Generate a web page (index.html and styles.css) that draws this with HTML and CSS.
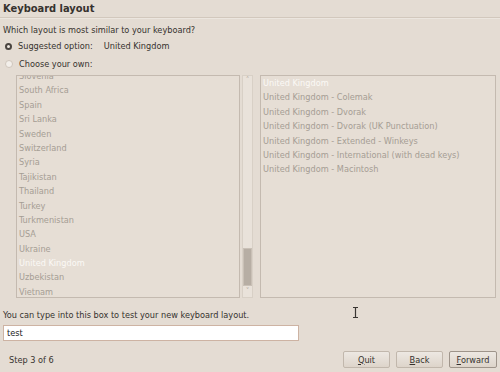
FILE: index.html
```html
<!DOCTYPE html>
<html lang="en">
<head>
    <meta charset="UTF-8">
    <title>Keyboard layout</title>
    <link rel="stylesheet" href="styles.css">
</head>
<body>
    <div class="window">
        <h1 class="title">Keyboard layout</h1>

        <div class="body">
            <p class="question">Which layout is most similar to your keyboard?</p>

            <label class="radio-row">
                <span class="radio checked"></span>
                <span>Suggested option:</span>
                <span class="suggested">United Kingdom</span>
            </label>
            <label class="radio-row">
                <span class="radio"></span>
                <span>Choose your own:</span>
            </label>

            <div class="lists">
                <div class="list countries">
                    <div class="rows shifted">
                        <div class="row">Slovenia</div>
                        <div class="row">South Africa</div>
                        <div class="row">Spain</div>
                        <div class="row">Sri Lanka</div>
                        <div class="row">Sweden</div>
                        <div class="row">Switzerland</div>
                        <div class="row">Syria</div>
                        <div class="row">Tajikistan</div>
                        <div class="row">Thailand</div>
                        <div class="row">Turkey</div>
                        <div class="row">Turkmenistan</div>
                        <div class="row">USA</div>
                        <div class="row">Ukraine</div>
                        <div class="row selected">United Kingdom</div>
                        <div class="row">Uzbekistan</div>
                        <div class="row">Vietnam</div>
                    </div>
                </div>
                <div class="scrollbar">
                    <span class="arrow">&#708;</span>
                    <span class="trough"><span class="thumb"></span></span>
                    <span class="arrow">&#709;</span>
                </div>
                <div class="list variants">
                    <div class="rows">
                        <div class="row selected">United Kingdom</div>
                        <div class="row">United Kingdom - Colemak</div>
                        <div class="row">United Kingdom - Dvorak</div>
                        <div class="row">United Kingdom - Dvorak (UK Punctuation)</div>
                        <div class="row">United Kingdom - Extended - Winkeys</div>
                        <div class="row">United Kingdom - International (with dead keys)</div>
                        <div class="row">United Kingdom - Macintosh</div>
                    </div>
                </div>
            </div>

            <p class="hint">You can type into this box to test your new keyboard layout.</p>
            <div class="test-box">test</div>

            <!-- mouse pointer from the screenshot -->
            <svg class="pointer" width="7" height="11" viewBox="0 0 7 11">
                <path d="M1 0.5h5M1 10.5h5M3.5 0.5v10" stroke="#3a3632" stroke-width="1.2" fill="none"/>
            </svg>
        </div>

        <div class="footer">
            <span class="step">Step 3 of 6</span>
            <div class="buttons">
                <button><u>Q</u>uit</button>
                <button><u>B</u>ack</button>
                <button class="default"><u>F</u>orward</button>
            </div>
        </div>
    </div>
</body>
</html>
```

FILE: styles.css
```css
body {
    margin: 0;
    background: #e4dcd3;
    font-family: 'DejaVu Sans Condensed', 'DejaVu Sans', sans-serif;
    font-size: 9.1px;
    color: #36322e;
}
.window {
    width: 500px;
    height: 372px;
    position: relative;
    overflow: hidden;
}
.title {
    margin: 0;
    padding: 1px 3px 0;
    height: 16px;
    font-size: 11px;
    font-weight: bold;
    line-height: 16px;
    border-bottom: 1px solid #d2c8bd;
    box-shadow: 0 1px 0 #ece6df;
}
.body {
    padding: 6px 3px 0;
}
.question {
    margin: 0;
    line-height: 13px;
}
.radio-row {
    display: flex;
    align-items: center;
    height: 18px;
}
.radio-row span:nth-child(2) {
    margin-left: 6px;
}
.radio {
    width: 6px;
    height: 6px;
    margin-left: 2px;
    border-radius: 50%;
    border: 1px solid #cfc6bc;
    background: #f3efea;
}
.radio.checked {
    border: 2px solid #4a4540;
    width: 3px;
    height: 3px;
    background: #efe9e2;
}
.suggested {
    margin-left: 11px;
}
.lists {
    display: flex;
    margin: 2px 0 0 13px;
    height: 223px;
}
.list {
    border: 1px solid #c4bab0;
    overflow: hidden;
    color: #a59d94;
    background: #e6ded5;
}
.countries {
    width: 222px;
}
.variants {
    width: 234px;
    margin-left: 7px;
}
.rows {
    padding: 0 2px;
}
.shifted {
    margin-top: -7px;
}
.row {
    height: 14.4px;
    line-height: 14.4px;
    white-space: nowrap;
}
.row.selected {
    color: #fbf9f6;
}
.scrollbar {
    width: 11px;
    margin-left: 2px;
    display: flex;
    flex-direction: column;
    border: 1px solid #d8d0c6;
    background: #e9e2da;
    box-sizing: border-box;
}
.arrow {
    height: 10px;
    font-size: 8px;
    line-height: 10px;
    text-align: center;
    color: #b8b0a6;
}
.trough {
    flex: 1;
    display: flex;
    flex-direction: column;
    justify-content: flex-end;
}
.thumb {
    height: 36px;
    margin: 0 0 1px;
    background: #b7aea4;
    border: 1px solid #c9c0b6;
}
.hint {
    margin: 10px 0 0;
    line-height: 14px;
}
.test-box {
    margin-top: 3px;
    width: 288px;
    height: 14px;
    padding: 0 3px 0 3px;
    line-height: 14px;
    background: #ffffff;
    border: 1px solid #cdb3a3;
    color: #222;
}
.pointer {
    position: absolute;
    left: 352px;
    top: 307px;
}
.footer {
    display: flex;
    align-items: center;
    justify-content: space-between;
    padding: 10px 3px 0 9px;
}
.buttons {
    display: flex;
    gap: 6px;
}
button {
    font-family: 'DejaVu Sans Condensed', 'DejaVu Sans', sans-serif;
    font-size: 9.1px;
    height: 17px;
    width: 47px;
    padding: 0;
    color: #36322e;
    background: linear-gradient(#ede8e2, #ddd4ca);
    border: 1px solid #c1b7ac;
    border-radius: 2px;
}
button.default {
    width: 48px;
    border-color: #9e948a;
}
```
